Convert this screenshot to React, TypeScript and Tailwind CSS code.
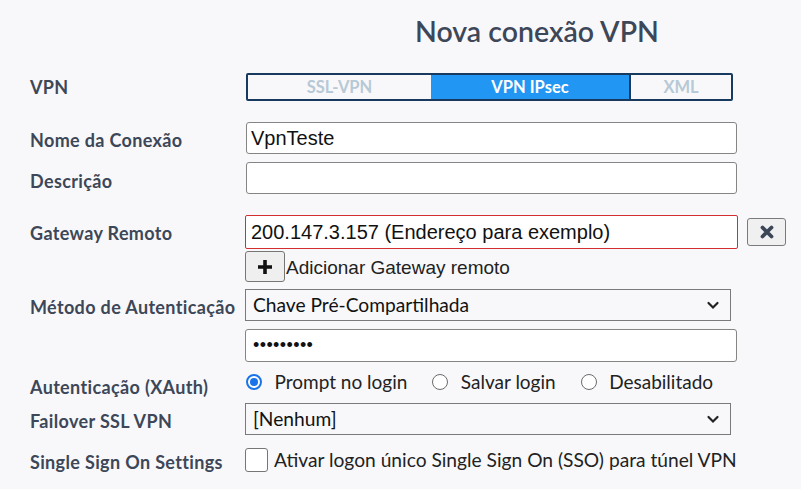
import React from "react";

const lato = { fontFamily: "Lato, 'Noto Sans', sans-serif" };
const arial = { fontFamily: "'Liberation Sans', Arial, sans-serif" };

function Label({ children, className = "" }: { children: React.ReactNode; className?: string }) {
  return (
    <div className={"w-[215px] shrink-0 whitespace-nowrap text-[18px] font-bold tracking-[0.35px] text-[#3d4757] " + className}>{children}</div>
  );
}

function Chevron() {
  return (
    <svg width="14" height="14" viewBox="0 0 14 14" className="text-[#222]">
      <path d="M2.5 5 L7 9.5 L11.5 5" fill="none" stroke="currentColor" strokeWidth="2.2" strokeLinecap="round" />
    </svg>
  );
}

function Radio({ checked, label }: { checked?: boolean; label: string }) {
  return (
    <div className="flex items-center gap-[12.5px]">
      {checked ? (
        <div className="w-[16px] h-[16px] rounded-full border-[2px] border-[#1a73e8] flex items-center justify-center bg-white">
          <div className="w-[8px] h-[8px] rounded-full bg-[#1a73e8]" />
        </div>
      ) : (
        <div className="w-[16px] h-[16px] rounded-full border border-[#6b6b6b] bg-white" />
      )}
      <span className="text-[19px] text-[#222]">{label}</span>
    </div>
  );
}

export default function App() {
  return (
    <div className="w-[801px] h-[489px] bg-[#f8f8fb] overflow-hidden pl-[30px]" style={lato}>
      <div className="h-[73px] pl-[385px] pt-[17px]">
        <h1 className="text-[28.5px] font-semibold text-[#3d4757] leading-none">Nova conexão VPN</h1>
      </div>
      {/* VPN */}
      <div className="flex items-center h-[28px]">
        <Label>VPN</Label>
        <div className="flex w-[487px] h-[28px] border-[2px] border-[#173a5e] rounded-[2px] text-[16.5px] font-bold ml-[1px]">
          <div className="w-[183px] flex items-center justify-center text-[#b7c9d5]">SSL-VPN</div>
          <div className="w-[198px] flex items-center justify-center bg-[#2196f3] text-white">VPN IPsec</div>
          <div className="flex-1 flex items-center justify-center text-[#b7c9d5] border-l-[2px] border-[#173a5e]">XML</div>
        </div>
      </div>
      {/* Nome */}
      <div className="flex items-center h-[32px] mt-[21px]">
        <Label className="pt-[4px]">Nome da Conexão</Label>
        <div className="ml-[1px] w-[491px] h-[32px] bg-white border border-[#858585] rounded-[3px] flex items-center px-[4px] text-[20px] text-[#111]" style={arial}>
          VpnTeste
        </div>
      </div>
      {/* Descrição */}
      <div className="flex items-center h-[32px] mt-[8px]">
        <Label className="pt-[6px]">Descrição</Label>
        <div className="ml-[1px] w-[491px] h-[32px] bg-white border border-[#858585] rounded-[3px]" />
      </div>
      {/* Gateway */}
      <div className="flex items-center h-[34px] mt-[21px]">
        <Label className="pt-[2px]">Gateway Remoto</Label>
        <div className="w-[493px] h-[34px] bg-white border border-[#d32f2f] rounded-[2px] flex items-center px-[5px] text-[20px] text-[#111]" style={arial}>
          200.147.3.157 (Endereço para exemplo)
        </div>
        <div className="ml-[9px] w-[39px] h-[28px] bg-[#f0f0f0] border border-[#7a7a7a] rounded-[3px] flex items-center justify-center">
          <svg width="14" height="14" viewBox="0 0 14 14">
            <path d="M2.5 2.5 L11.5 11.5 M11.5 2.5 L2.5 11.5" stroke="#3b4656" strokeWidth="3.8" strokeLinecap="round" />
          </svg>
        </div>
      </div>
      {/* Add gateway */}
      <div className="flex items-center h-[31px] mt-[2px]">
        <div className="w-[215px] shrink-0" />
        <div className="w-[40px] h-[31px] bg-[#efefef] border border-[#767676] rounded-[3px] flex items-center justify-center">
          <svg width="16" height="16" viewBox="0 0 16 16">
            <path d="M8 1 V15 M1 8 H15" stroke="#111" strokeWidth="3.6" />
          </svg>
        </div>
        <span className="ml-[1px] text-[19px] text-[#222] pt-[4px]" style={arial}>Adicionar Gateway remoto</span>
      </div>
      {/* Método */}
      <div className="flex items-center h-[32px] mt-[7px]">
        <Label className="pt-[5px]">Método de Autenticação</Label>
        <div className="w-[486px] h-[32px] bg-[#f8f8fb] border border-[#7a7a7a] flex items-center justify-between pl-[7px] pr-[10px] text-[19.2px] text-[#111]">
          <span>Chave Pré-Compartilhada</span>
          <Chevron />
        </div>
      </div>
      {/* Password */}
      <div className="flex items-center h-[33px] mt-[8px]">
        <div className="w-[215px] shrink-0" />
        <div className="w-[492px] h-[33px] bg-white border border-[#858585] rounded-[3px] flex items-center px-[7px] text-[18px] text-[#111] tracking-[0.4px]" style={arial}>
          •••••••••
        </div>
      </div>
      {/* XAuth */}
      <div className="flex items-center h-[24px] mt-[8px]">
        <Label className="pt-[10px]">Autenticação (XAuth)</Label>
        <div className="flex items-center gap-[25px] pl-[1px]">
          <Radio checked label="Prompt no login" />
          <Radio label="Salvar login" />
          <Radio label="Desabilitado" />
        </div>
      </div>
      {/* Failover */}
      <div className="flex items-center h-[32px] mt-[9px]">
        <Label className="pt-[4px]">Failover SSL VPN</Label>
        <div className="w-[486px] h-[32px] bg-[#f8f8fb] border border-[#7a7a7a] flex items-center justify-between pl-[7px] pr-[10px] text-[19.2px] text-[#111]">
          <span>[Nenhum]</span>
          <Chevron />
        </div>
      </div>
      {/* SSO */}
      <div className="flex items-center h-[24px] mt-[13px]">
        <Label className="pt-[4px]">Single Sign On Settings</Label>
        <div className="w-[23px] h-[24px] bg-white border border-[#767676] rounded-[3px]" />
        <span className="ml-[6px] text-[19.2px] text-[#222]">Ativar logon único Single Sign On (SSO) para túnel VPN</span>
      </div>
    </div>
  );
}
